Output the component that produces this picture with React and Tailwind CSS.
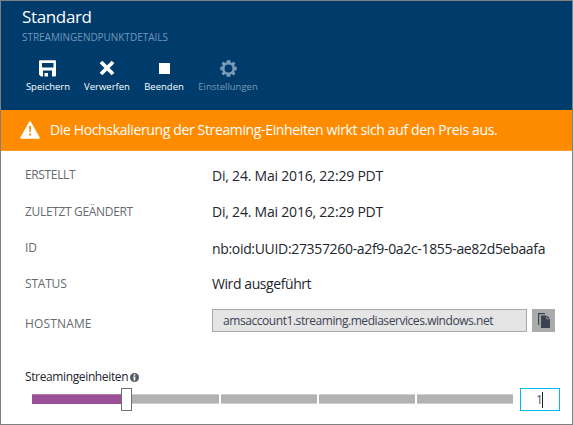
import React from 'react';

const details = [
  { label: 'ERSTELLT', value: 'Di, 24. Mai 2016, 22:29 PDT', labelStyle: 'tracking-[-0.35px] pb-[2px]', valueStyle: 'tracking-[-0.21px]' },
  { label: 'ZULETZT GEÄNDERT', value: 'Di, 24. Mai 2016, 22:29 PDT', labelStyle: 'tracking-[-0.33px]', valueStyle: 'tracking-[-0.21px]' },
  { label: 'ID', value: 'nb:oid:UUID:27357260-a2f9-0a2c-1855-ae82d5ebaafa', labelStyle: 'tracking-[-0.1px]', valueStyle: 'tracking-[-0.33px] pt-[2px]' },
  { label: 'STATUS', value: 'Wird ausgeführt', labelStyle: 'tracking-[-0.2px]', valueStyle: 'tracking-[-0.42px]' },
];

function SaveIcon() {
  return (
    <svg width="17" height="17" viewBox="0 0 17 17" fill="white">
      <path fillRule="evenodd" d="M1 0.3H16Q17 0.3 17 1.3V15.5Q17 16.5 16 16.5H2L0 14.5V1.3Q0 0.3 1 0.3ZM3 3V7.5H14.5V3ZM4 10.5V16.5H13V10.5Z" />
      <path d="M5.5 13H9V16.5H5.5Z" />
    </svg>
  );
}

function CrossIcon() {
  return (
    <svg width="16" height="16" viewBox="0 0 16 16" stroke="white" strokeWidth="3.8">
      <path d="M2 2L14 14M14 2L2 14" />
    </svg>
  );
}

function GearIcon() {
  return (
    <svg width="17" height="17" viewBox="-8.5 -8.5 17 17" fill="#7a9ab6">
      <path fillRule="evenodd" d="M-1.8-8.2H1.8L2.1-6.1L3.3-5.5L5-6.9L7-4.8L5.6-3.2L6.1-2L8.2-1.7V1.7L6.1 2L5.6 3.2L7 4.9L5 6.9L3.3 5.5L2.1 6.1L1.8 8.2H-1.8L-2.1 6.1L-3.3 5.5L-5 6.9L-7 4.9L-5.6 3.2L-6.1 2L-8.2 1.7V-1.7L-6.1-2L-5.6-3.2L-7-4.8L-5-6.9L-3.3-5.5L-2.1-6.1ZM0-3.9A3.9 3.9 0 1 0 0 3.9A3.9 3.9 0 1 0 0-3.9Z" />
    </svg>
  );
}

function Command({ icon, label, className }) {
  return (
    <div className={`flex flex-col items-center ${className}`}>
      <div className="flex h-[18px] items-center justify-center">{icon}</div>
      <span className="mt-[3px] text-[9.5px] leading-[14px] font-medium whitespace-nowrap">{label}</span>
    </div>
  );
}

export default function App() {
  return (
    <div className="flex h-[425px] w-[573px] flex-col overflow-hidden border border-[#808080] bg-white font-['Open_Sans','Noto_Sans',sans-serif] text-[#22262e]">
      <header className="h-[109px] shrink-0 bg-[#003c6b] pl-[21px] text-white">
        <h1 className="pt-[4px] text-[17px] leading-[24px] tracking-[-0.35px]">Standard</h1>
        <p className="mt-px text-[10px] leading-[14px] tracking-[-0.03px] text-[#7196b7]">STREAMINGENDPUNKTDETAILS</p>
        <div className="mt-[15px] flex">
          <Command icon={<span className="-ml-px"><SaveIcon /></span>} label="Speichern" className="ml-[4px] w-[44px]" />
          <Command icon={<CrossIcon />} label="Verwerfen" className="ml-[15px] w-[44px]" />
          <Command icon={<span className="block size-[11px] bg-white" />} label="Beenden" className="ml-[14px] w-[42px]" />
          <Command icon={<GearIcon />} label="Einstellungen" className="ml-[13px] w-[60px] text-[#7a9ab6]" />
        </div>
      </header>

      <div className="flex h-[41px] shrink-0 items-center border-b border-[#ff9d26] bg-[#ff8c00] pl-[19px] text-white">
        <svg width="20" height="18" viewBox="0 0 20 18">
          <path d="M10 1L19 17H1Z" fill="white" stroke="white" strokeWidth="1.6" strokeLinejoin="round" />
          <path d="M9 5H11L10.7 11H9.3ZM9 12.5H11V14.5H9Z" fill="#ff8c00" />
        </svg>
        <span className="ml-[10px] text-[14px] leading-[20px] tracking-[-0.36px] whitespace-nowrap">Die Hochskalierung der Streaming-Einheiten wirkt sich auf den Preis aus.</span>
      </div>

      <main className="pt-[7px]">
        {details.map((row) => (
          <div key={row.label} className="flex h-[36px] items-center pl-[24px]">
            <span className={`w-[187px] text-[12px] leading-[18px] text-[#666a70] ${row.labelStyle}`}>{row.label}</span>
            <span className={`text-[14px] leading-[20px] whitespace-nowrap ${row.valueStyle}`}>{row.value}</span>
          </div>
        ))}
        <div className="mt-[7px] flex h-[23px] pl-[24px]">
          <span className="w-[187px] pt-[6px] text-[12px] leading-[18px] tracking-[0.15px] text-[#666a70]">HOSTNAME</span>
          <div className="flex h-[23px] w-[315px] items-center border border-[#a8a8a8] bg-[#e5e5e5] pl-[10px] text-[12px] leading-[18px] tracking-[-0.44px] text-[#3b4252]">amsaccount1.streaming.mediaservices.windows.net</div>
          <button className="ml-[5px] flex h-[23px] w-[23px] items-center justify-center bg-[#ababab]">
            <svg width="12" height="15" viewBox="0 0 12 15" fill="#3b4350">
              <path d="M0 0H7V1.2H1.2V12H0ZM3 2.5H8.5V6.3H12V15H3ZM9.2 2.5L12 5.5H9.2Z" />
            </svg>
          </button>
        </div>
        <div className="mt-[36px] flex h-[18px] items-center pl-[24px]">
          <span className="text-[12px] leading-[18px] tracking-[-0.37px]">Streamingeinheiten</span>
          <svg className="ml-[2px]" width="9" height="9" viewBox="0 0 9 9">
            <circle cx="4.5" cy="4.5" r="4.5" fill="#555b64" />
            <path d="M3.7 1.3H5.3V2.7H3.7ZM3.2 3.6H5.3V7.5H3.6V4.4H3.2Z" fill="white" />
          </svg>
        </div>
        <div className="mt-[2px] flex h-[23px] pl-[31px]">
          <div className="mt-[6px] h-[10px] w-[89px] border-t border-[#b57bb1] bg-[#9b4f96]" />
          <div className="h-[23px] w-[11px] border border-[#707070] bg-white" />
          <div className="mt-[6px] h-[10px] w-[87px] border-y border-[#cfcfcf] bg-[#b2b2b2]" />
          <div className="mt-[6px] ml-[2px] h-[10px] w-[96px] border-y border-[#cfcfcf] bg-[#b2b2b2]" />
          <div className="mt-[6px] ml-[2px] h-[10px] w-[96px] border-y border-[#cfcfcf] bg-[#b2b2b2]" />
          <div className="mt-[6px] ml-[2px] h-[10px] w-[96px] border-y border-[#cfcfcf] bg-[#b2b2b2]" />
          <div className="ml-[7px] flex h-[23px] w-[40px] items-center border border-[#00b9f2] bg-white pl-[15px] text-[12px] text-[#4a5264]">
            1<span className="-ml-px h-[16px] w-px bg-[#222]" />
          </div>
        </div>
      </main>
    </div>
  );
}
